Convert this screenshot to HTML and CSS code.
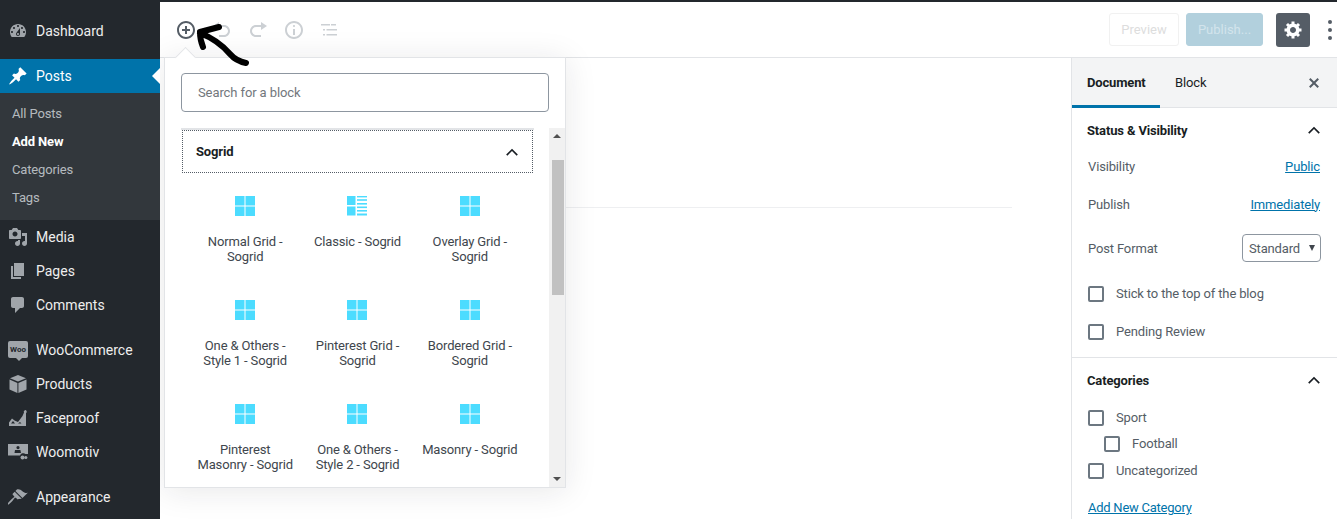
FILE: index.html
```html
<!DOCTYPE html>
<html>
<head>
    <meta charset="UTF-8">
    <title>Add New Post</title>
    <link rel="stylesheet" href="styles.css">
</head>
<body>
    <svg class="sprite" aria-hidden="true">
        <symbol id="grid-icon" viewBox="0 0 20 20">
            <rect x="0" y="0" width="9.5" height="9.5"/>
            <rect x="10.5" y="0" width="9.5" height="9.5"/>
            <rect x="0" y="10.5" width="9.5" height="9.5"/>
            <rect x="10.5" y="10.5" width="9.5" height="9.5"/>
        </symbol>
        <symbol id="classic-icon" viewBox="0 0 20 20">
            <rect x="0" y="0" width="8.5" height="9"/>
            <rect x="0" y="10.5" width="8.5" height="9"/>
            <rect x="10" y="0" width="10" height="1.4"/>
            <rect x="10" y="3" width="10" height="2" opacity=".8"/>
            <rect x="10" y="7" width="10" height="1.6"/>
            <rect x="10" y="10.5" width="10" height="1.6"/>
            <rect x="10" y="14" width="10" height="1.6"/>
            <rect x="10" y="17.5" width="10" height="2"/>
        </symbol>
        <symbol id="chevron-up" viewBox="0 0 24 24">
            <path d="M6.41 15.41L12 9.83l5.59 5.58L19 14l-7-7-7 7z" transform="translate(0 1)"/>
        </symbol>
    </svg>

    <div class="topline"></div>
    <div class="wrap">
        <nav class="adminmenu">
            <a class="menu-item">
                <svg viewBox="0 0 20 20"><path d="M3.76 16h12.48c1.1-1.37 1.76-3.11 1.76-5 0-4.42-3.58-8-8-8s-8 3.58-8 8c0 1.89.66 3.63 1.76 5zM10 4c.55 0 1 .45 1 1s-.45 1-1 1-1-.45-1-1 .45-1 1-1zM6 6c.55 0 1 .45 1 1s-.45 1-1 1-1-.45-1-1 .45-1 1-1zm8 0c.55 0 1 .45 1 1s-.45 1-1 1-1-.45-1-1 .45-1 1-1zm-5.37 5.55L12 7v6c0 1.1-.9 2-2 2s-2-.9-2-2c0-.57.24-1.08.63-1.45zM4 10c.55 0 1 .45 1 1s-.45 1-1 1-1-.45-1-1 .45-1 1-1zm12 0c.55 0 1 .45 1 1s-.45 1-1 1-1-.45-1-1 .45-1 1-1zm-5 3c0-.55-.45-1-1-1s-1 .45-1 1 .45 1 1 1 1-.45 1-1z"/></svg>
                Dashboard
            </a>
            <div class="menu-gap"></div>
            <a class="menu-item current">
                <svg viewBox="0 0 20 20"><path d="M10.44 3.02l1.82-1.82 6.36 6.35-1.83 1.82c-1.05-.68-2.48-.57-3.41.36l-.75.75c-.92.93-1.04 2.35-.35 3.41l-1.83 1.82-2.41-2.41-2.8 2.79c-.42.42-3.38 2.71-3.8 2.29s1.86-3.39 2.28-3.81l2.79-2.79L4.1 9.36l1.83-1.82c1.05.69 2.48.57 3.4-.36l.75-.75c.93-.92 1.05-2.35.36-3.41z"/></svg>
                Posts
            </a>
            <div class="submenu">
                <a>All Posts</a>
                <a class="active">Add New</a>
                <a>Categories</a>
                <a>Tags</a>
            </div>
            <a class="menu-item">
                <svg viewBox="0 0 20 20"><path d="M13 11V4c0-.55-.45-1-1-1h-1.67L9 1H5L3.67 3H2c-.55 0-1 .45-1 1v7c0 .55.45 1 1 1h10c.55 0 1-.45 1-1zM7 4.5c1.38 0 2.5 1.12 2.5 2.5S8.38 9.5 7 9.5 4.5 8.38 4.5 7 5.62 4.5 7 4.5zM14 6h5v10.5c0 1.38-1.12 2.5-2.5 2.5S14 17.88 14 16.5s1.12-2.5 2.5-2.5c.17 0 .34.02.5.05V9h-3V6zm-4 8.05V13h2v3.5c0 1.38-1.12 2.5-2.5 2.5S7 17.88 7 16.5 8.12 14 9.5 14c.17 0 .34.02.5.05z"/></svg>
                Media
            </a>
            <a class="menu-item">
                <svg viewBox="0 0 20 20"><path d="M6 15V2h10v13H6zm-1 1h8v2H3V5h2v11z"/></svg>
                Pages
            </a>
            <a class="menu-item">
                <svg viewBox="0 0 20 20"><path d="M5 2h9c1.1 0 2 .9 2 2v7c0 1.1-.9 2-2 2h-2l-5 5v-5H5c-1.1 0-2-.9-2-2V4c0-1.1.9-2 2-2z"/></svg>
                Comments
            </a>
            <div class="menu-gap"></div>
            <a class="menu-item">
                <span class="woo-icon">Woo</span>
                WooCommerce
            </a>
            <a class="menu-item">
                <svg viewBox="0 0 20 20"><path d="M10 1l8 3.200-8 3.400-8-3.400z"/><path d="M1.500 5.600l7.900 3.300V19l-7.900-3.600zM18.500 5.600l-8.100 3.300V19l8.100-3.600z"/></svg>
                Products
            </a>
            <a class="menu-item">
                <svg viewBox="0 0 20 20"><path d="M1 18v-3.500l3-4 2.500 2 3.500 1.500 4.500-6 1.500-3.500a1.500 1.500 0 1 1 2 .5V18zM5 13l-2 2.500h4zM10 15.500h3.500l-1.500-1.500z"/></svg>
                Faceproof
            </a>
            <a class="menu-item">
                <svg viewBox="0 0 20 20"><path d="M0 2h20v10h-2.500a3.500 3.500 0 0 0-5.500 1.500H0zM10 4a1.600 1.600 0 1 0 0 3.200A1.600 1.600 0 0 0 10 4zM6.500 11h6.500l-.6-3H7z" fill-rule="evenodd"/><circle cx="14.500" cy="15.500" r="2"/><circle cx="17.800" cy="15.500" r="1.600"/></svg>
                Woomotiv
            </a>
            <div class="menu-gap"></div>
            <a class="menu-item">
                <svg viewBox="0 0 20 20"><path d="M14.480 11.060L7.410 3.990l1.500-1.500c.5-.56 2.300-.47 3.510.32 1.210.8 1.430 1.280 2.910 2.100 1.180.64 2.450 1.260 4.450.85zm-.71.71L6.700 4.700 4.930 6.470c-.39.39-.39 1.020 0 1.410l1.060 1.060c.39.39.39 1.030 0 1.420-.6.6-1.430 1.110-2.210 1.690-.35.26-.7.53-1.010.84-1.430 1.430-4.030 4.020-3.360 4.740.68.68 3.310-1.930 4.740-3.360.31-.31.58-.66.84-1.010.58-.78 1.090-1.610 1.690-2.210.39-.39 1.030-.39 1.420 0l1.060 1.060c.39.39 1.020.39 1.410 0z"/></svg>
                Appearance
            </a>
        </nav>

        <div class="editor">
            <header class="editor-header">
                <div class="header-tools">
                    <svg class="tool inserter" viewBox="0 0 20 20"><path d="M10 1c-4.970 0-9 4.030-9 9s4.030 9 9 9 9-4.030 9-9-4.030-9-9-9zm0 16c-3.870 0-7-3.130-7-7s3.130-7 7-7 7 3.130 7 7-3.130 7-7 7zm1-11H9v3H6v2h3v3h2v-3h3V9h-3V6z"/></svg>
                    <svg class="tool" viewBox="0 0 20 20"><path d="M12 5H7V2L1 6l6 4V7h5c2.200 0 4 1.800 4 4s-1.800 4-4 4H7v2h5c3.300 0 6-2.700 6-6s-2.700-6-6-6z"/></svg>
                    <svg class="tool" viewBox="0 0 20 20"><path d="M8 5h5V2l6 4-6 4V7H8c-2.200 0-4 1.800-4 4s1.800 4 4 4h5v2H8c-3.300 0-6-2.700-6-6s2.700-6 6-6z"/></svg>
                    <svg class="tool" viewBox="0 0 20 20"><path d="M10 1c4.970 0 9 4.030 9 9s-4.030 9-9 9-9-4.030-9-9 4.030-9 9-9zm0 2c-3.870 0-7 3.130-7 7s3.130 7 7 7 7-3.130 7-7-3.130-7-7-7zm1 3c0-.55-.45-1-1-1s-1 .45-1 1 .45 1 1 1 1-.45 1-1zm0 9V9H9v6z"/></svg>
                    <svg class="tool" viewBox="0 0 20 20"><path d="M1 4h9v1.500H1zM11 4h5v1.500h-5zM3 9h2v1.500H3zM6.500 9H17v1.500H6.500zM3 14h2v1.500H3zM6.500 14H17v1.500H6.500z"/></svg>
                </div>
                <div class="header-actions">
                    <button class="btn-preview">Preview</button>
                    <button class="btn-publish">Publish...</button>
                    <button class="btn-settings">
                        <svg viewBox="0 0 20 20"><path d="M18 12h-2.180c-.17.7-.44 1.350-.81 1.930l1.540 1.540-2.100 2.100-1.540-1.540c-.58.36-1.230.63-1.910.79V19H8v-2.180c-.68-.16-1.330-.43-1.910-.79l-1.540 1.540-2.120-2.120 1.540-1.540c-.36-.58-.63-1.230-.79-1.910H1V9.030h2.170c.16-.7.44-1.350.8-1.940L2.430 5.550l2.100-2.100 1.540 1.540c.58-.37 1.240-.64 1.930-.81V2h3v2.180c.68.16 1.330.43 1.910.79l1.540-1.540 2.120 2.120-1.540 1.540c.36.59.64 1.240.8 1.940H18V12zm-8.500 1.500c1.660 0 3-1.340 3-3s-1.340-3-3-3-3 1.340-3 3 1.340 3 3 3z" transform="translate(.5 -.5)"/></svg>
                    </button>
                    <div class="more-dots"><i></i><i></i><i></i></div>
                </div>
            </header>

            <div class="editor-body">
                <main class="content">
                    <div class="post-title"></div>

                    <!-- block inserter -->
                    <div class="inserter-popover">
                        <div class="inserter-search">
                            <input type="text" placeholder="Search for a block">
                        </div>
                        <div class="inserter-list">
                            <div class="inserter-results">
                                <div class="panel-head">
                                    <div class="panel-toggle">
                                        <span>Sogrid</span>
                                        <svg viewBox="0 0 24 24"><use href="#chevron-up"/></svg>
                                    </div>
                                </div>
                                <div class="block-grid">
                                    <div class="block-item"><svg><use href="#grid-icon"/></svg><span>Normal Grid - Sogrid</span></div>
                                    <div class="block-item"><svg><use href="#classic-icon"/></svg><span>Classic - Sogrid</span></div>
                                    <div class="block-item"><svg><use href="#grid-icon"/></svg><span>Overlay Grid - Sogrid</span></div>
                                    <div class="block-item"><svg><use href="#grid-icon"/></svg><span>One &amp; Others - Style 1 - Sogrid</span></div>
                                    <div class="block-item"><svg><use href="#grid-icon"/></svg><span>Pinterest Grid - Sogrid</span></div>
                                    <div class="block-item"><svg><use href="#grid-icon"/></svg><span>Bordered Grid - Sogrid</span></div>
                                    <div class="block-item"><svg><use href="#grid-icon"/></svg><span>Pinterest Masonry - Sogrid</span></div>
                                    <div class="block-item"><svg><use href="#grid-icon"/></svg><span>One &amp; Others - Style 2 - Sogrid</span></div>
                                    <div class="block-item"><svg><use href="#grid-icon"/></svg><span>Masonry - Sogrid</span></div>
                                </div>
                            </div>
                            <div class="scrollbar">
                                <div class="scroll-up"></div>
                                <div class="scroll-track"><div class="scroll-thumb"></div></div>
                                <div class="scroll-down"></div>
                            </div>
                        </div>
                    </div>

                    <!-- hand drawn arrow from the screenshot -->
                    <svg class="scribble" viewBox="0 0 60 50">
                        <path d="M6 8 L25 3 M6 8 Q6 16 9 23 M6 9 Q24 16 36 30 Q42 37 52 39"/>
                    </svg>
                </main>

                <aside class="settings">
                    <div class="settings-tabs">
                        <div class="tab current">Document</div>
                        <div class="tab">Block</div>
                        <svg class="tabs-close" viewBox="0 0 20 20"><path d="M14.950 6.460L11.410 10l3.540 3.540-1.410 1.410L10 11.420l-3.530 3.530-1.420-1.420L8.580 10 5.050 6.470l1.420-1.420L10 8.580l3.540-3.530z"/></svg>
                    </div>

                    <section class="panel status-panel">
                        <h2>Status &amp; Visibility <svg viewBox="0 0 24 24"><use href="#chevron-up"/></svg></h2>
                        <div class="row row-visibility"><span>Visibility</span><a>Public</a></div>
                        <div class="row row-publish"><span>Publish</span><a>Immediately</a></div>
                        <div class="row row-format">
                            <span>Post Format</span>
                            <div class="fake-select">Standard<i></i></div>
                        </div>
                        <label class="check check-first"><i></i>Stick to the top of the blog</label>
                        <label class="check"><i></i>Pending Review</label>
                    </section>

                    <section class="panel cat-panel">
                        <h2>Categories <svg viewBox="0 0 24 24"><use href="#chevron-up"/></svg></h2>
                        <label class="cat"><i></i>Sport</label>
                        <label class="cat child"><i></i>Football</label>
                        <label class="cat"><i></i>Uncategorized</label>
                        <a class="add-cat">Add New Category</a>
                    </section>
                </aside>
            </div>
        </div>
    </div>
</body>
</html>
```

FILE: styles.css
```css
* {
    box-sizing: border-box;
}

html, body {
    height: 100%;
}

body {
    margin: 0;
    font-family: Roboto, "Noto Sans", sans-serif;
    font-size: 13px;
    letter-spacing: -0.15px;
    color: #555d66;
    background: #fff;
    overflow: hidden;
    display: flex;
    flex-direction: column;
}

.sprite {
    display: none;
}

.topline {
    height: 2px;
    flex-shrink: 0;
    background: #23282d;
}

.wrap {
    flex: 1;
    display: flex;
    min-height: 0;
}

/* admin menu */
.adminmenu {
    width: 160px;
    flex-shrink: 0;
    padding-top: 12px;
    background: #23282d;
    position: relative;
    z-index: 5;
}

.menu-item {
    height: 34px;
    display: flex;
    align-items: center;
    padding-left: 8px;
    font-size: 14px;
    letter-spacing: 0;
    color: #eee;
    position: relative;
}

.menu-item svg {
    width: 20px;
    height: 20px;
    margin-right: 8px;
    fill: #a0a5aa;
    flex-shrink: 0;
}

.menu-gap {
    height: 11px;
}

.menu-item.current {
    background: #0073aa;
    color: #fff;
}

.menu-item.current svg {
    fill: #fff;
}

.menu-item.current::after {
    content: "";
    position: absolute;
    right: 0;
    top: 9px;
    border: 8px solid transparent;
    border-right-color: #fff;
    border-left-width: 0;
}

.woo-icon {
    width: 20px;
    height: 17px;
    margin-right: 8px;
    margin-top: -2px;
    background: #a0a5aa;
    border-radius: 2px;
    color: #23282d;
    font-size: 8px;
    font-weight: 700;
    line-height: 17px;
    text-align: center;
    flex-shrink: 0;
    position: relative;
}

.woo-icon::after {
    content: "";
    position: absolute;
    left: 8px;
    bottom: -3px;
    border: 3px solid transparent;
    border-top-color: #a0a5aa;
    border-bottom-width: 0;
}

.submenu {
    height: 127px;
    padding: 7px 0 8px;
    background: #32373c;
}

.submenu a {
    display: block;
    height: 28px;
    line-height: 28px;
    padding-left: 12px;
    color: rgba(240, 245, 250, 0.7);
}

.submenu a.active {
    color: #fff;
    font-weight: 700;
}

/* editor */
.editor {
    flex: 1;
    min-width: 0;
    display: flex;
    flex-direction: column;
}

.editor-header {
    height: 56px;
    flex-shrink: 0;
    display: flex;
    align-items: center;
    justify-content: space-between;
    border-bottom: 1px solid #e2e4e7;
    background: #fff;
}

.header-tools {
    display: flex;
    align-items: center;
    padding-left: 16px;
    gap: 16px;
}

.tool {
    width: 20px;
    height: 20px;
    fill: #ccd0d4;
}

.tool.inserter {
    fill: #555d66;
}

.header-actions {
    display: flex;
    align-items: center;
    padding-right: 3px;
}

.header-actions button {
    font-family: inherit;
    font-size: 13px;
    letter-spacing: 0;
    border-radius: 3px;
    height: 33px;
    padding: 0;
}

.btn-preview {
    width: 70px;
    margin-right: 7px;
    background: #fff;
    border: 1px solid #f1f1f1;
    color: #ddd;
}

.btn-publish {
    width: 77px;
    margin-right: 13px;
    background: #b2d0dd;
    border: 1px solid #b2d0dd;
    color: #d3e4ec;
}

.header-actions .btn-settings {
    width: 34px;
    height: 34px;
    margin-right: 18px;
    background: #555d66;
    border: 0;
    display: flex;
    align-items: center;
    justify-content: center;
}

.btn-settings svg {
    width: 20px;
    height: 20px;
    fill: #fff;
}

.more-dots {
    display: flex;
    flex-direction: column;
    gap: 4px;
    width: 4px;
    margin-right: 2px;
}

.more-dots i {
    width: 4px;
    height: 4px;
    border-radius: 50%;
    background: #555d66;
}

.editor-body {
    flex: 1;
    display: flex;
    min-height: 0;
}

.content {
    flex: 1;
    min-width: 0;
    position: relative;
}

.post-title {
    width: 793px;
    height: 150px;
    margin: 0 auto;
    border-bottom: 1px solid #eeeff1;
}

/* inserter popover */
.inserter-popover {
    position: absolute;
    left: 4px;
    top: -1px;
    width: 402px;
    height: 431px;
    display: flex;
    flex-direction: column;
    background: #fff;
    border: 1px solid #e2e4e7;
    box-shadow: 0 3px 30px rgba(25, 30, 35, 0.1);
    z-index: 3;
}

.inserter-popover::before {
    content: "";
    position: absolute;
    left: 13px;
    top: -8px;
    width: 14px;
    height: 14px;
    background: #fff;
    border-top: 1px solid #e2e4e7;
    border-left: 1px solid #e2e4e7;
    transform: rotate(45deg);
}

.inserter-search {
    padding: 15px 16px 16px;
    position: relative;
}

.inserter-search input {
    display: block;
    width: 100%;
    height: 39px;
    padding: 0 16px;
    border: 1px solid #8d96a0;
    border-radius: 4px;
    font-family: inherit;
    font-size: 13px;
    letter-spacing: -0.1px;
    background: #fff;
}

.inserter-search input::placeholder {
    color: #72777c;
    opacity: 1;
}

.inserter-list {
    flex: 1;
    min-height: 0;
    display: flex;
}

.inserter-results {
    flex: 1;
    min-width: 0;
    overflow: hidden;
    padding: 0 0 0 16px;
}

.panel-head {
    width: 353px;
    border-top: 2px solid #e2e4e7;
    padding: 0 1px;
}

.panel-toggle {
    height: 43px;
    padding: 0 13px;
    display: flex;
    align-items: center;
    justify-content: space-between;
    font-weight: 700;
    color: #191e23;
    border: 1px dotted #555d66;
}

.panel-toggle svg {
    width: 20px;
    height: 20px;
    margin-right: -3px;
    fill: #191e23;
}

.block-grid {
    width: 353px;
    padding: 23px 8px 0;
    display: grid;
    grid-template-columns: repeat(3, 1fr);
    grid-auto-rows: 104px;
}

.block-item {
    display: flex;
    flex-direction: column;
    align-items: center;
    text-align: center;
    line-height: 15px;
    color: #40464d;
}

.block-item svg {
    width: 20px;
    height: 20px;
    fill: #4cdcff;
    margin-bottom: 18px;
}

.block-item span {
    width: 100px;
}

.scrollbar {
    width: 16px;
    display: flex;
    flex-direction: column;
    background: #f1f1f1;
}

.scroll-up, .scroll-down {
    height: 16px;
    flex-shrink: 0;
    display: flex;
    align-items: center;
    justify-content: center;
}

.scroll-up::before, .scroll-down::before {
    content: "";
    border: 4px solid transparent;
}

.scroll-up::before {
    border-bottom: 4px solid #505050;
    border-top-width: 0;
}

.scroll-down::before {
    border-top: 4px solid #505050;
    border-bottom-width: 0;
}

.scroll-track {
    flex: 1;
    padding-top: 16px;
}

.scroll-thumb {
    height: 135px;
    margin: 0 1px 0 3px;
    background: #c1c1c1;
}

.scribble {
    position: absolute;
    left: 34px;
    top: -34px;
    width: 60px;
    height: 50px;
    overflow: visible;
    fill: none;
    stroke: #000;
    stroke-width: 6;
    stroke-linecap: round;
    stroke-linejoin: round;
    z-index: 4;
}

/* settings sidebar */
.settings {
    width: 266px;
    flex-shrink: 0;
    border-left: 1px solid #e2e4e7;
    background: #fff;
}

.settings-tabs {
    height: 50px;
    display: flex;
    align-items: stretch;
    background: #f3f4f5;
    border-bottom: 1px solid #e2e4e7;
    position: relative;
}

.tab {
    padding: 0 15px;
    line-height: 49px;
    color: #191e23;
}

.tab.current {
    width: 88px;
    font-weight: 700;
    border-bottom: 3px solid #0073aa;
    height: 50px;
}

.tabs-close {
    position: absolute;
    right: 13px;
    top: 15px;
    width: 20px;
    height: 20px;
    fill: #555d66;
}

.panel {
    padding: 0 17px 0 16px;
    border-bottom: 1px solid #e2e4e7;
}

.panel h2 {
    margin: 0 0 0 -1px;
    height: 44px;
    display: flex;
    align-items: center;
    justify-content: space-between;
    font-size: 13px;
    font-weight: 700;
    color: #191e23;
}

.panel h2 svg {
    width: 20px;
    height: 20px;
    fill: #191e23;
    margin-right: -4px;
}

.status-panel {
    height: 250px;
}

.row {
    display: flex;
    align-items: center;
    justify-content: space-between;
}

.row a, .add-cat {
    color: #0073aa;
    text-decoration: underline;
}

.row-visibility {
    height: 20px;
    margin-top: 4px;
}

.row-publish {
    height: 20px;
    margin-top: 18px;
}

.row-format {
    height: 28px;
    margin-top: 20px;
}

.fake-select {
    width: 79px;
    height: 28px;
    line-height: 28px;
    padding-left: 6px;
    margin-right: -1px;
    border: 1px solid #8d96a0;
    border-radius: 4px;
    position: relative;
}

.fake-select i {
    position: absolute;
    right: 5px;
    top: 10px;
    border: 3.500px solid transparent;
    border-top: 6px solid #40464d;
    border-bottom-width: 0;
}

.check, .cat {
    display: flex;
    align-items: center;
    height: 16px;
}

.check i, .cat i {
    width: 16px;
    height: 16px;
    margin: 2px 12px 0 0;
    border: 2px solid #6c7781;
    border-radius: 2px;
    flex-shrink: 0;
}

.check-first {
    margin-top: 23px;
}

.check + .check {
    margin-top: 22px;
}

.cat-panel {
    border-bottom: 0;
}

.cat-panel h2 {
    margin-bottom: 7px;
}

.cat + .cat {
    margin-top: 11px;
}

.cat.child {
    padding-left: 16px;
    margin-top: 10px;
}

.add-cat {
    display: block;
    margin-top: 22px;
    letter-spacing: -0.25px;
}
```
